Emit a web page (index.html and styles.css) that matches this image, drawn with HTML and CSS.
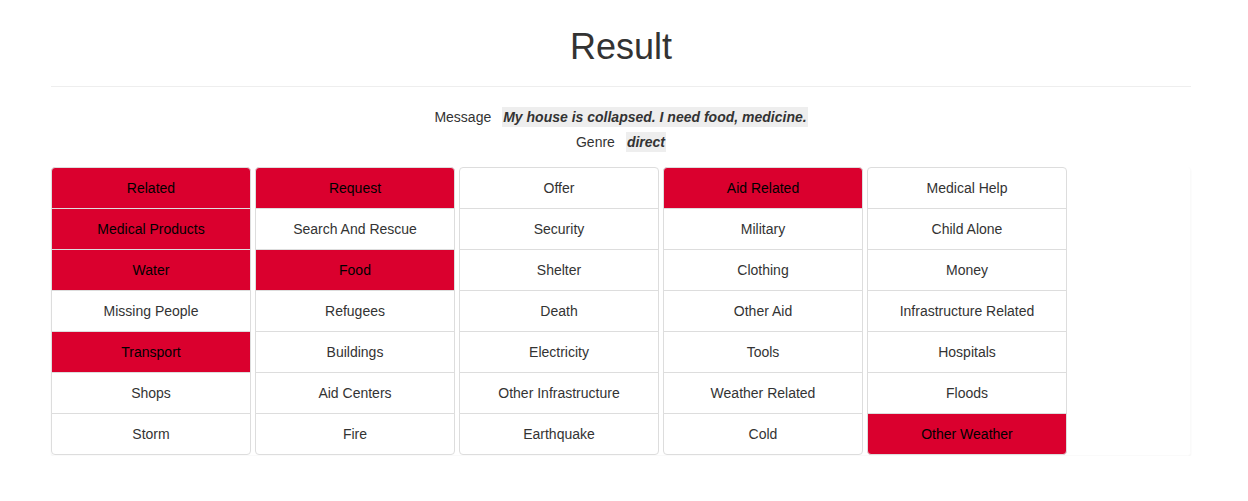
FILE: index.html
```html
<!DOCTYPE html>
<html>
<head>
<meta charset="utf-8">
<link rel="stylesheet" href="styles.css">
</head>
<body>
<div class="container">
  <div class="page-header">
    <h1 class="title">Result</h1>
  </div>
  <div class="info">
    <div class="info-row"><span class="label">Message</span><span class="value">My house is collapsed. I need food, medicine.</span></div>
    <div class="info-row"><span class="label">Genre</span><span class="value">direct</span></div>
  </div>
  <div class="card">
    <ul class="list-group">
      <li class="item on">Related</li>
      <li class="item on">Medical Products</li>
      <li class="item on">Water</li>
      <li class="item">Missing People</li>
      <li class="item on">Transport</li>
      <li class="item">Shops</li>
      <li class="item">Storm</li>
    </ul>
    <ul class="list-group">
      <li class="item on">Request</li>
      <li class="item">Search And Rescue</li>
      <li class="item on">Food</li>
      <li class="item">Refugees</li>
      <li class="item">Buildings</li>
      <li class="item">Aid Centers</li>
      <li class="item">Fire</li>
    </ul>
    <ul class="list-group">
      <li class="item">Offer</li>
      <li class="item">Security</li>
      <li class="item">Shelter</li>
      <li class="item">Death</li>
      <li class="item">Electricity</li>
      <li class="item">Other Infrastructure</li>
      <li class="item">Earthquake</li>
    </ul>
    <ul class="list-group">
      <li class="item on">Aid Related</li>
      <li class="item">Military</li>
      <li class="item">Clothing</li>
      <li class="item">Other Aid</li>
      <li class="item">Tools</li>
      <li class="item">Weather Related</li>
      <li class="item">Cold</li>
    </ul>
    <ul class="list-group">
      <li class="item">Medical Help</li>
      <li class="item">Child Alone</li>
      <li class="item">Money</li>
      <li class="item">Infrastructure Related</li>
      <li class="item">Hospitals</li>
      <li class="item">Floods</li>
      <li class="item on">Other Weather</li>
    </ul>
  </div>
</div>
</body>
</html>
```

FILE: styles.css
```css
* { box-sizing: border-box; }
html, body {
  margin: 0;
  padding: 0;
  background: #fff;
  font-family: "Liberation Sans", Arial, Helvetica, sans-serif;
  font-size: 14px;
  line-height: 20px;
  color: #333;
}
.container {
  width: 1140px;
  margin: 0 0 0 51px;
}
.page-header {
  padding: 27px 0 19px;
  border-bottom: 1px solid #eee;
  margin-bottom: 20px;
}
.title {
  margin: 0;
  font-size: 36px;
  font-weight: 500;
  line-height: 39.6px;
  text-align: center;
  color: #333;
}
.info {
  display: flex;
  flex-direction: column;
  align-items: center;
  gap: 5px;
  margin-bottom: 15px;
}
.info-row {
  display: flex;
  align-items: center;
  gap: 11px;
  height: 20px;
}
.value {
  background: #eee;
  font-weight: bold;
  font-style: italic;
  padding: 0 1px;
  line-height: 20px;
}
.card {
  display: flex;
  gap: 4px;
  border-radius: 4px;
  box-shadow: 0 1px 2px rgba(0,0,0,0.06);
  border: 1px solid rgba(0,0,0,0.02);
  border-left: none;
  border-top: none;
}
.list-group {
  list-style: none;
  margin: 0;
  padding: 0;
  width: 200px;
}
.item {
  height: 42px;
  margin-bottom: -1px;
  padding: 10px 15px;
  border: 1px solid #ddd;
  text-align: center;
  background: #fff;
  color: #333;
}
.item:first-child {
  border-top-left-radius: 4px;
  border-top-right-radius: 4px;
}
.item:last-child {
  margin-bottom: 0;
  border-bottom-left-radius: 4px;
  border-bottom-right-radius: 4px;
}
.item.on {
  background: #da002e;
  color: #000;
}
```
